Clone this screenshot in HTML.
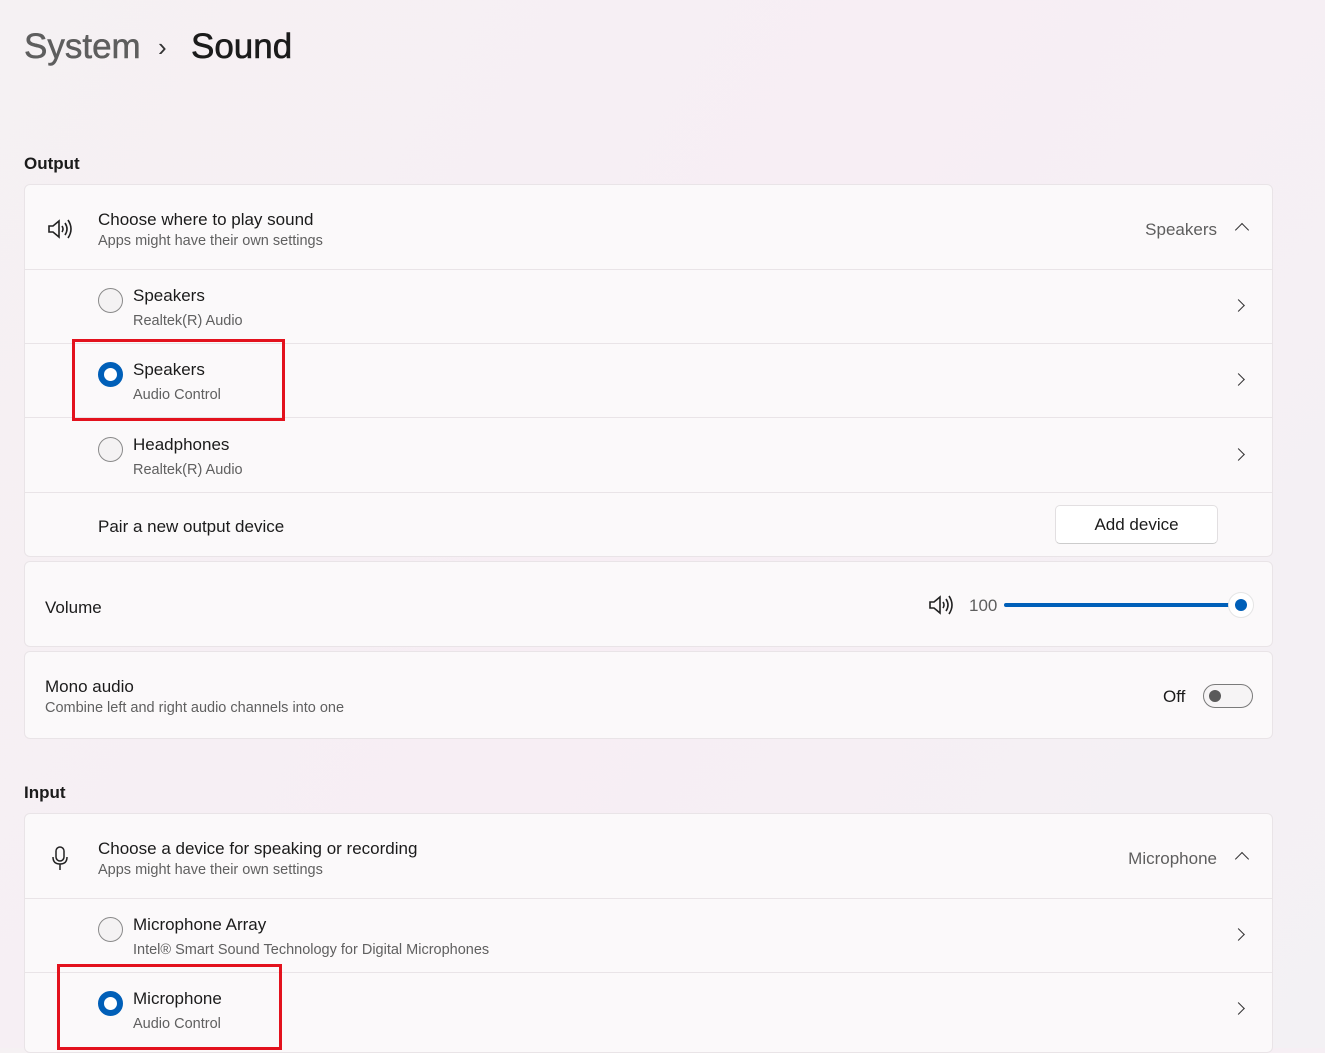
<!DOCTYPE html>
<html><head><meta charset="utf-8"><style>
*{box-sizing:border-box;margin:0;padding:0}
body{width:1325px;height:1048px;overflow:hidden;font-family:"Liberation Sans",sans-serif;color:#1b1b1b;background:linear-gradient(120deg,#f5f1f3 0%,#f7eef4 50%,#f3f1f4 100%);position:relative}
.a{position:absolute}
.card{position:absolute;left:24px;width:1249px;background:#fbf9fa;border:1px solid #e9e4e7;border-radius:6px}
.row{position:absolute;left:0;right:0;border-top:1px solid #e9e4e7}
.t{font-size:17px;color:#1b1b1b}
.s{font-size:14.5px;color:#606060}
.radio{position:absolute;left:73px;width:25px;height:25px;border-radius:50%;border:1.5px solid #8a8a8a;background:#f4f2f3}
.sel{border:6px solid #005fb8;background:#fff}
.chev{position:absolute;right:29px;width:9px;height:9px;border-right:1.6px solid #333;border-top:1.6px solid #333;transform:rotate(45deg)}
.up{position:absolute;right:25px;width:10px;height:10px;border-left:1.6px solid #333;border-top:1.6px solid #333;transform:rotate(45deg)}
.red{position:absolute;border:3px solid #e3121d}
h2{position:absolute;left:24px;font-size:17px;font-weight:bold;color:#1b1b1b}
</style></head><body>
<div class="a" style="left:24px;top:27px;font-size:35px;color:#5e5e5e;-webkit-text-stroke:0.5px #5e5e5e">System</div>
<div class="a" style="left:158px;top:32px;font-size:26px;color:#333">›</div>
<div class="a" style="left:191px;top:27px;font-size:35px;color:#1b1b1b;-webkit-text-stroke:0.6px #1b1b1b">Sound</div>
<h2 style="top:154px">Output</h2>
<div class="card" style="top:184px;height:373px">
 <svg class="a" style="left:22px;top:33px" width="28" height="22" viewBox="0 0 28 22" fill="none" stroke="#222" stroke-width="1.6"><path d="M2 8h4l6-5v16l-6-5H2z"/><path d="M15 8q2 3 0 6M18 5q4 6 0 12M21 2q6 9 0 18"/></svg>
 <div class="a t" style="left:73px;top:25px">Choose where to play sound</div>
 <div class="a s" style="left:73px;top:48px">Apps might have their own settings</div>
 <div class="a" style="right:55px;top:35px;font-size:17px;color:#5e5e5e">Speakers</div>
 <div class="up" style="top:40px"></div>
 <div class="row" style="top:84px;height:74px"><div class="radio" style="top:18px"></div><div class="a t" style="left:108px;top:16px">Speakers</div><div class="a s" style="left:108px;top:43px">Realtek(R) Audio</div><div class="chev" style="top:31px"></div></div>
 <div class="row" style="top:158px;height:74px"><div class="radio sel" style="top:18px"></div><div class="a t" style="left:108px;top:16px">Speakers</div><div class="a s" style="left:108px;top:43px">Audio Control</div><div class="chev" style="top:31px"></div></div>
 <div class="row" style="top:232px;height:75px"><div class="radio" style="top:19px"></div><div class="a t" style="left:108px;top:17px">Headphones</div><div class="a s" style="left:108px;top:44px">Realtek(R) Audio</div><div class="chev" style="top:32px"></div></div>
 <div class="row" style="top:307px;height:64px"><div class="a t" style="left:73px;top:24px">Pair a new output device</div>
 <div class="a" style="left:1030px;top:12px;width:163px;height:39px;background:#fff;border:1px solid #e2dfe1;border-bottom-color:#ccc;border-radius:5px;font-size:17px;text-align:center;line-height:37px">Add device</div></div>
</div>
<div class="card" style="top:561px;height:86px">
 <div class="a t" style="left:20px;top:36px">Volume</div>
 <svg class="a" style="left:903px;top:32px" width="28" height="22" viewBox="0 0 28 22" fill="none" stroke="#222" stroke-width="1.6"><path d="M2 8h4l6-5v16l-6-5H2z"/><path d="M15 8q2 3 0 6M18 5q4 6 0 12M21 2q6 9 0 18"/></svg>
 <div class="a" style="left:944px;top:34px;font-size:17px;color:#5e5e5e">100</div>
 <div class="a" style="left:979px;top:41px;width:230px;height:4px;background:#005fb8;border-radius:2px"></div>
 <div class="a" style="left:1203px;top:30px;width:26px;height:26px;border-radius:50%;background:#fff;border:1px solid #e5e5e5"><div class="a" style="left:6px;top:6px;width:12px;height:12px;border-radius:50%;background:#005fb8"></div></div>
</div>
<div class="card" style="top:651px;height:88px">
 <div class="a t" style="left:20px;top:25px">Mono audio</div>
 <div class="a s" style="left:20px;top:48px">Combine left and right audio channels into one</div>
 <div class="a" style="left:1138px;top:35px;font-size:17px">Off</div>
 <div class="a" style="left:1178px;top:32px;width:50px;height:24px;border-radius:12px;border:1.5px solid #7a7a7a;background:#f6f4f5"><div class="a" style="left:5px;top:5px;width:12px;height:12px;border-radius:50%;background:#5a5a5a"></div></div>
</div>
<h2 style="top:783px">Input</h2>
<div class="card" style="top:813px;height:240px">
 <svg class="a" style="left:26px;top:32px" width="18" height="26" viewBox="0 0 18 26" fill="none" stroke="#222" stroke-width="1.5"><rect x="5" y="1" width="8" height="14" rx="4"/><path d="M2 11q0 7 7 7q7 0 7-7M9 18v6"/></svg>
 <div class="a t" style="left:73px;top:25px">Choose a device for speaking or recording</div>
 <div class="a s" style="left:73px;top:48px">Apps might have their own settings</div>
 <div class="a" style="right:55px;top:35px;font-size:17px;color:#5e5e5e">Microphone</div>
 <div class="up" style="top:40px"></div>
 <div class="row" style="top:84px;height:74px"><div class="radio" style="top:18px"></div><div class="a t" style="left:108px;top:16px">Microphone Array</div><div class="a s" style="left:108px;top:43px">Intel® Smart Sound Technology for Digital Microphones</div><div class="chev" style="top:31px"></div></div>
 <div class="row" style="top:158px;height:80px"><div class="radio sel" style="top:18px"></div><div class="a t" style="left:108px;top:16px">Microphone</div><div class="a s" style="left:108px;top:43px">Audio Control</div><div class="chev" style="top:31px"></div></div>
</div>
<div class="red" style="left:72px;top:339px;width:213px;height:82px"></div>
<div class="red" style="left:57px;top:964px;width:225px;height:86px"></div>
</body></html>
